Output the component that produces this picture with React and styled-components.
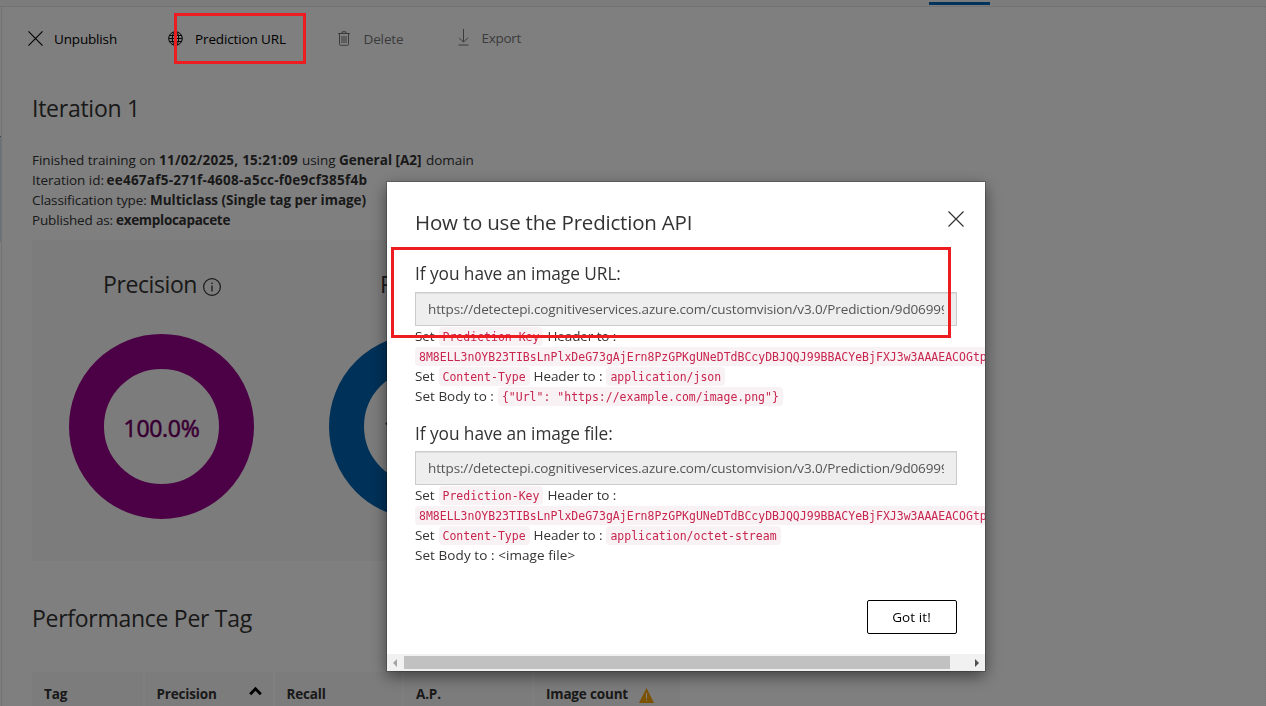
import React from 'react';
import styled, { createGlobalStyle } from 'styled-components';

const GlobalStyle = createGlobalStyle`
  * { box-sizing: border-box; }
  body {
    margin: 0;
    overflow: hidden;
    background: #fff;
    color: #333;
    font: 13.5px/20px "Open Sans", "Noto Sans", sans-serif;
    letter-spacing: -0.13px;
  }
`;

const Page = styled.div`
  display: flex;
  flex-direction: column;
  width: 1266px;
  height: 706px;
  overflow: hidden;
`;
const NavBar = styled.header`
  flex: none;
  height: 7px;
  padding: 2px 276px 0 0;
  background: #f9f9f9;
  border-bottom: 1px solid #e4e4e4;
  display: flex;
  justify-content: flex-end;
`;
const ActiveTab = styled.div`
  width: 61px;
  height: 3px;
  background: #0067b8;
`;
const Main = styled.div`
  flex: 1;
  display: flex;
  min-height: 0;
`;
const SideRail = styled.div`
  width: 2px;
  flex: none;
  padding-top: 129px;
  border-right: 1px solid #e4e4e4;
`;
const SelectedIteration = styled.div`
  height: 106px;
  background: #cce6f8;
  border-top: 1px solid #888;
`;
const Content = styled.main`
  flex: 1;
  padding-left: 30px;
  border-right: 1px dotted #f0f0f0;
`;

const Toolbar = styled.div`
  display: flex;
  height: 63px;
  margin-left: -4px;
`;
const Command = styled.div`
  display: flex;
  align-items: center;
  width: ${(p) => p.$width}px;
  gap: ${(p) => p.$gap}px;
  height: 63px;
  color: ${(p) => (p.$disabled ? '#777' : '#000')};
  letter-spacing: ${(p) => p.$track || -0.13}px;
  padding-bottom: ${(p) => p.$lift || 0}px;
  svg { flex: none; margin-top: -1px; }
`;

const Heading = styled.h2`
  margin: 0;
  font-size: 23px;
  line-height: 30px;
  font-weight: 400;
  letter-spacing: ${(p) => p.$track}px;
  padding-top: ${(p) => p.$top}px;
`;
const Details = styled.div`
  margin-top: 27px;
`;
const DetailLine = styled.div`
  height: 20px;
  display: flex;
  white-space: pre;
`;
const Lead = styled.span`
  width: ${(p) => p.$width}px;
  letter-spacing: ${(p) => p.$track || -0.05}px;
`;
const Value = styled.b`
  width: ${(p) => p.$width}px;
  letter-spacing: ${(p) => p.$track}px;
`;

const Metrics = styled.section`
  display: flex;
  width: 800px;
  height: 321px;
  margin-top: 10px;
  background: #f8f8f8;
`;
const Metric = styled.div`
  width: 260px;
  display: flex;
  flex-direction: column;
  align-items: center;
`;
const MetricTitle = styled.div`
  display: flex;
  align-items: center;
  gap: 6px;
  margin-top: 28px;
  height: 32px;
  font-size: 23px;
  letter-spacing: -0.4px;
  svg { margin-top: 6px; }
`;
const Donut = styled.div`
  display: flex;
  align-items: center;
  justify-content: center;
  width: 185px;
  height: 185px;
  margin: 34px 1px 0 0;
  padding-top: 2px;
  border: 35px solid ${(p) => p.$color};
  border-radius: 50%;
  color: ${(p) => p.$ink};
  font-size: 23px;
  font-weight: 500;
  letter-spacing: -0.3px;
  -webkit-text-stroke: 0.6px ${(p) => p.$color};
`;

const TableHead = styled.div`
  display: flex;
  gap: 2px;
  margin-top: 39px;
  height: 60px;
`;
const HeadCell = styled.div`
  display: flex;
  gap: ${(p) => p.$gap || 0}px;
  width: ${(p) => p.$width}px;
  padding: 12px 0 0 12px;
  background: #f8f8f8;
  font-weight: 700;
  letter-spacing: ${(p) => p.$track || -0.17}px;
  white-space: nowrap;
  svg { flex: none; margin-top: ${(p) => p.$drop || 0}px; }
`;

const Backdrop = styled.div`
  position: fixed;
  inset: 0;
  display: flex;
  padding: 182px 0 0 387px;
  background: rgba(0, 0, 0, 0.5);
`;
const Dialog = styled.div`
  display: flex;
  flex-direction: column;
  width: 598px;
  height: 489px;
  overflow: hidden;
  background: #fff;
  box-shadow: 0 0 0 1px rgba(0, 0, 0, 0.2), 0 5px 15px rgba(0, 0, 0, 0.5);
`;
const DialogHeader = styled.div`
  display: flex;
  justify-content: space-between;
  align-items: flex-start;
  padding: 25px 21px 0 28px;
  height: 77px;
  svg { margin-top: 4px; }
`;
const DialogTitle = styled.h3`
  margin: 0;
  font-size: 20.5px;
  line-height: 30px;
  font-weight: 400;
  letter-spacing: -0.2px;
`;
const DialogBody = styled.div`
  padding: 0 28px;
  height: 341px;
`;
const Usage = styled.section`
  margin-bottom: 12px;
`;
const UsageTitle = styled.h4`
  margin: 0;
  height: 33px;
  padding-top: ${(p) => p.$drop}px;
  font-size: 17.3px;
  line-height: 29px;
  font-weight: 400;
  letter-spacing: -0.06px;
`;
const UrlField = styled.div`
  width: 542px;
  height: 34px;
  padding: ${(p) => p.$drop}px 12px 0;
  border: 1px solid #ccc;
  background: #eee;
  color: #555;
  box-shadow: inset 0 1px 1px rgba(0, 0, 0, 0.075);
`;
const UrlText = styled.div`
  overflow: hidden;
  white-space: nowrap;
  line-height: 31px;
`;
const Step = styled.div`
  display: flex;
  align-items: center;
  gap: 4px;
  height: 20px;
  white-space: nowrap;
`;
const Word = styled.span`
  letter-spacing: ${(p) => p.$track || -0.1}px;
`;
const Code = styled.code`
  flex: none;
  height: 19px;
  padding: 1px 4px 0;
  border-radius: 4px;
  background: #f9f2f4;
  color: #c7254e;
  font: 11.51px/18px "DejaVu Sans Mono", monospace;
  letter-spacing: 0;
`;
const DialogFooter = styled.div`
  flex: 1;
  display: flex;
  justify-content: flex-end;
  align-items: flex-start;
  padding-right: 28px;
`;
const OkButton = styled.button`
  width: 90px;
  height: 34px;
  padding: 0 1px 0 0;
  border: 1px solid #000;
  border-radius: 2px;
  background: #fff;
  color: #000;
  font: inherit;
  letter-spacing: 0.1px;
`;
const ScrollBar = styled.div`
  display: flex;
  align-items: center;
  height: 17px;
  background: #f1f1f1;
`;
const ScrollArrow = styled.div`
  display: flex;
  justify-content: center;
  width: 17px;
`;
const ScrollThumb = styled.div`
  width: 546px;
  height: 13px;
  margin-right: 18px;
  background: #c1c1c1;
`;
const Highlight = styled.div`
  position: fixed;
  left: ${(p) => p.$x}px;
  top: ${(p) => p.$y}px;
  width: ${(p) => p.$w}px;
  height: ${(p) => p.$h}px;
  border: 3px solid #ec1c20;
`;

const Cross = ({ size }) => (
  <svg width={size} height={size} viewBox="0 0 16 16" fill="none" stroke="currentColor" strokeWidth="1.2">
    <path d="M.5.5l15 15M15.5.5l-15 15" />
  </svg>
);
const Globe = () => (
  <svg width="15" height="15" viewBox="0 0 15 15" fill="none" stroke="currentColor">
    <circle cx="7.5" cy="7.5" r="6.8" />
    <ellipse cx="7.5" cy="7.5" rx="3.2" ry="6.8" />
    <path d="M7.5 .7v13.6M1.5 4.5h12M.7 7.5h13.6M1.5 10.5h12" strokeWidth=".9" />
  </svg>
);
const Trash = () => (
  <svg width="12" height="15" viewBox="0 0 12 15" fill="none" stroke="currentColor">
    <path d="M0 2.5h12M4 2.3V.8h4v1.5M1.5 2.5v11q0 .8.8.8h7.4q.8 0 .8-.8v-11M4 5v7M6 5v7M8 5v7" />
  </svg>
);
const Download = () => (
  <svg width="11" height="17" viewBox="0 0 11 17" fill="none" stroke="currentColor">
    <path d="M5.5 0v13M1 8.7l4.5 4.5L10 8.7M.5 16h10" />
  </svg>
);
const Info = () => (
  <svg width="18" height="18" viewBox="0 0 18 18" fill="none" stroke="currentColor">
    <circle cx="9" cy="9" r="8.4" strokeWidth="1.2" />
    <path d="M9 7.5v6M9 4.6v1.5" strokeWidth="1.3" />
  </svg>
);
const SortUp = () => (
  <svg width="13" height="10" viewBox="0 0 13 10" fill="none" stroke="#000" strokeWidth="2.8">
    <path d="M1.2 8.3l5.3-5.6 5.3 5.6" />
  </svg>
);
const Warning = () => (
  <svg width="15" height="15" viewBox="0 0 15 15">
    <path d="M7.5 0L15 15H0z" fill="#f5a500" />
    <path d="M7.5 5v5.5M7.5 11.7v1.4" stroke="#fff" strokeWidth="1.1" />
  </svg>
);
const Triangle = ({ left }) => (
  <svg width="5" height="8" viewBox="0 0 5 8">
    <path d={left ? 'M4 0v8L0 4z' : 'M1 0v8l4-4z'} fill={left ? '#a3a3a3' : '#505050'} />
  </svg>
);

const metrics = [
  { name: 'Precision', color: '#99008a', ink: '#4a0044' },
  { name: 'Recall', color: '#0063b1', ink: '#003059' },
  { name: 'A.P.', color: '#008272', ink: '#004139' },
];
const ENDPOINT = 'https://detectepi.cognitiveservices.azure.com/customvision/v3.0/Prediction/9d069990';
const KEY = '8M8ELL3nOYB23TIBsLnPlxDeG73gAjErn8PzGPKgUNeDTdBCcyDBJQQJ99BBACYeBjFXJ3w3AAAEACOGtp';

const UsageBlock = ({ title, drop, contentType, children }) => (
  <Usage>
    <UsageTitle $drop={drop}>{title}</UsageTitle>
    <UrlField $drop={drop ? 1 : 0.5}><UrlText>{ENDPOINT}</UrlText></UrlField>
    <Step><Word>Set</Word><Code>Prediction-Key</Code><Word>Header to :</Word></Step>
    <Step><Code>{KEY}</Code></Step>
    <Step><Word>Set</Word><Code>Content-Type</Code><Word>Header to :</Word><Code>{contentType}</Code></Step>
    <Step>{children}</Step>
  </Usage>
);

export default function App() {
  return (
    <>
      <GlobalStyle />
      <Page>
        <NavBar><ActiveTab /></NavBar>
        <Main>
          <SideRail><SelectedIteration /></SideRail>
          <Content>
            <Toolbar>
              <Command $width={140} $gap={11} $track={-0.16}><Cross size={15} />Unpublish</Command>
              <Command $width={169.5} $gap={12}><Globe />Prediction URL</Command>
              <Command $width={120} $gap={14} $disabled><Trash />Delete</Command>
              <Command $width={120} $gap={13} $disabled $track={-0.3} $lift={2}><Download />Export</Command>
            </Toolbar>
            <Heading $top={23} $track={-0.26}>Iteration 1</Heading>
            <Details>
              <DetailLine>
                <Lead $width={127}>Finished training on </Lead>
                <Value $width={143} $track={0.24}>11/02/2025, 15:21:09</Value>
                <Lead $width={37}>using </Lead>
                <Value $width={87} $track={0}>General [A2]</Value>
                <Lead>domain</Lead>
              </DetailLine>
              <DetailLine>
                <Lead $width={74.5}>Iteration id: </Lead>
                <Value $track={0.24}>ee467af5-271f-4608-a5cc-f0e9cf385f4b</Value>
              </DetailLine>
              <DetailLine>
                <Lead $width={118} $track={-0.1}>Classification type: </Lead>
                <Value $track={-0.03}>Multiclass (Single tag per image)</Value>
              </DetailLine>
              <DetailLine>
                <Lead $width={84} $track={-0.16}>Published as: </Lead>
                <Value $track={-0.3}>exemplocapacete</Value>
              </DetailLine>
            </Details>
            <Metrics>
              {metrics.map((m) => (
                <Metric key={m.name}>
                  <MetricTitle>{m.name}<Info /></MetricTitle>
                  <Donut $color={m.color} $ink={m.ink}>100.0%</Donut>
                </Metric>
              ))}
            </Metrics>
            <Heading $top={42} $track={-0.28}>Performance Per Tag</Heading>
            <TableHead>
              <HeadCell $width={110.5}>Tag</HeadCell>
              <HeadCell $width={128} $gap={32.5} $drop={2}>Precision<SortUp /></HeadCell>
              <HeadCell $width={127.5}>Recall</HeadCell>
              <HeadCell $width={128}>A.P.</HeadCell>
              <HeadCell $width={146} $gap={11} $drop={4}>Image count<Warning /></HeadCell>
            </TableHead>
          </Content>
        </Main>
      </Page>
      <Backdrop>
        <Dialog>
          <DialogHeader>
            <DialogTitle>How to use the Prediction API</DialogTitle>
            <Cross size={16} />
          </DialogHeader>
          <DialogBody>
            <UsageBlock title="If you have an image URL:" drop={0} contentType="application/json">
              <Word $track={0.02}>Set Body to :</Word>
              <Code>{'{"Url": "https://example.com/image.png"}'}</Code>
            </UsageBlock>
            <UsageBlock title="If you have an image file:" drop={1} contentType="application/octet-stream">
              <Word $track={0.07}>{'Set Body to : <image file>'}</Word>
            </UsageBlock>
          </DialogBody>
          <DialogFooter><OkButton>Got it!</OkButton></DialogFooter>
          <ScrollBar>
            <ScrollArrow><Triangle left /></ScrollArrow>
            <ScrollThumb />
            <ScrollArrow><Triangle /></ScrollArrow>
          </ScrollBar>
        </Dialog>
      </Backdrop>
      <Highlight $x={173.5} $y={13} $w={132} $h={50.5} />
      <Highlight $x={391} $y={247} $w={560} $h={91} />
    </>
  );
}
